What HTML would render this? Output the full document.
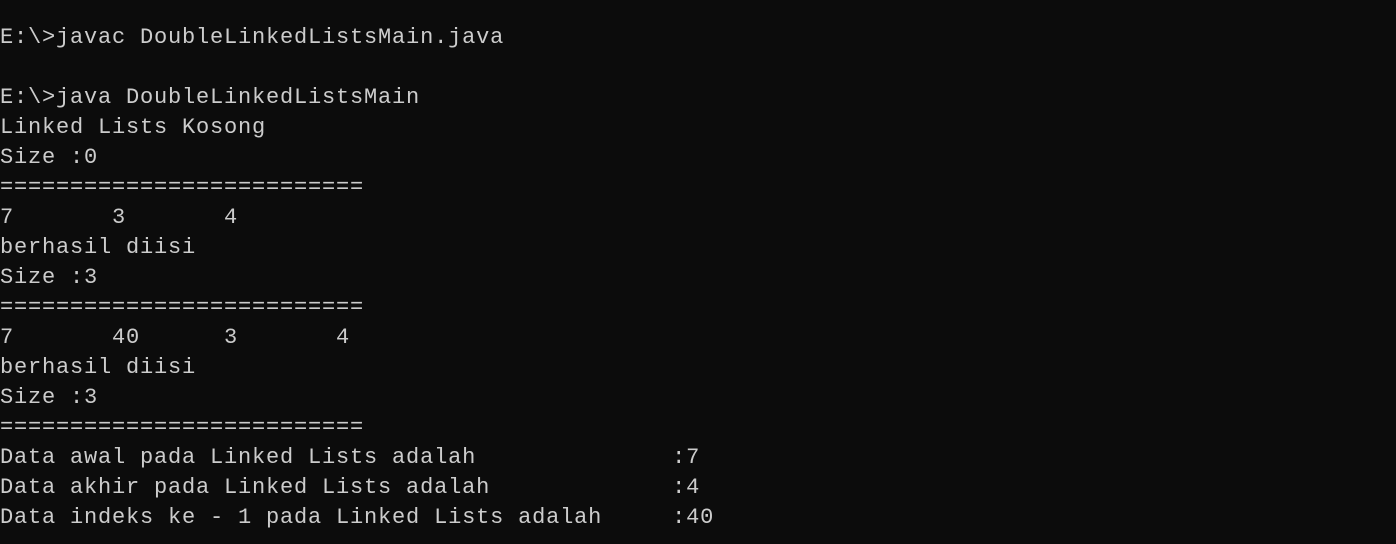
<!DOCTYPE html>
<html><head><style>
html,body{margin:0;padding:0;background:#0c0c0c;width:1396px;height:544px;overflow:hidden}
pre{margin:0;padding:23px 0 0 0;color:#cccccc;font-family:"Liberation Mono",monospace;font-size:22px;letter-spacing:0.8px;line-height:30px;white-space:pre}
</style></head><body><pre>E:\&gt;javac DoubleLinkedListsMain.java

E:\&gt;java DoubleLinkedListsMain
Linked Lists Kosong
Size :0
==========================
7       3       4
berhasil diisi
Size :3
==========================
7       40      3       4
berhasil diisi
Size :3
==========================
Data awal pada Linked Lists adalah              :7
Data akhir pada Linked Lists adalah             :4
Data indeks ke - 1 pada Linked Lists adalah     :40</pre></body></html>
